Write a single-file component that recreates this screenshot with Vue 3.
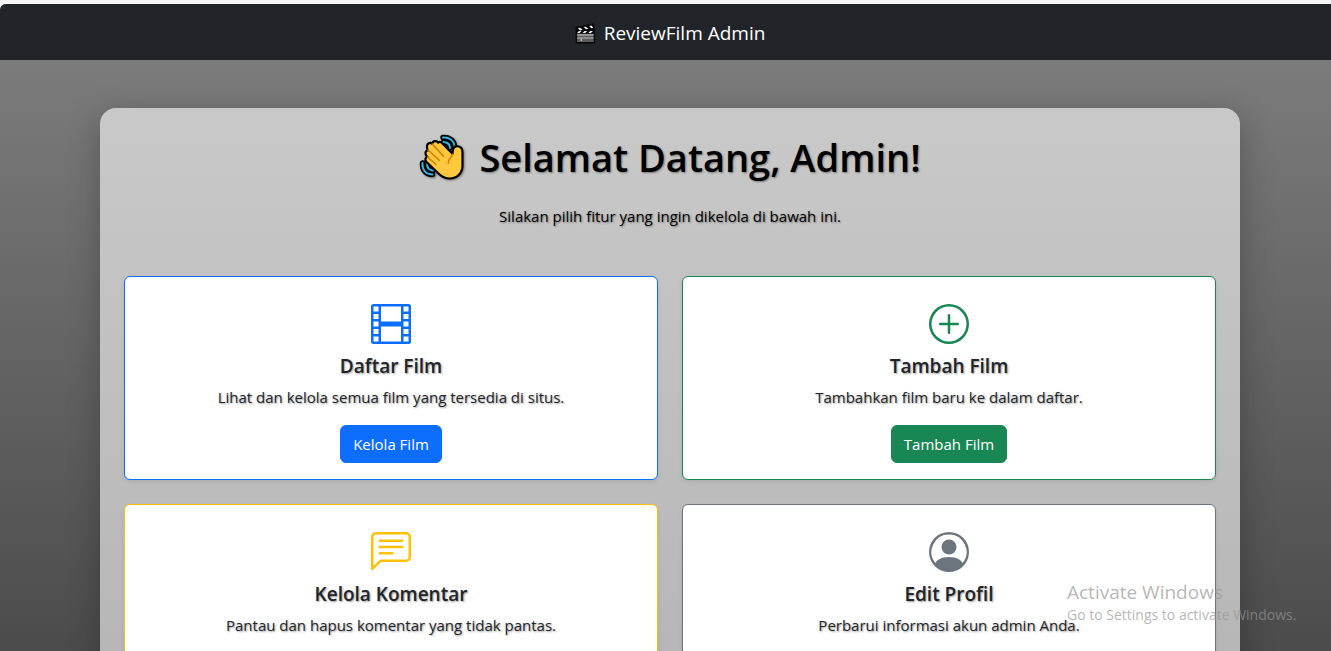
<script setup>
const features = [
  { id: 'film', tone: 'blue', title: 'Daftar Film', text: 'Lihat dan kelola semua film yang tersedia di situs.', action: 'Kelola Film' },
  { id: 'plus', tone: 'green', title: 'Tambah Film', text: 'Tambahkan film baru ke dalam daftar.', action: 'Tambah Film' },
  { id: 'chat', tone: 'yellow', title: 'Kelola Komentar', text: 'Pantau dan hapus komentar yang tidak pantas.' },
  { id: 'person', tone: 'gray', title: 'Edit Profil', text: 'Perbarui informasi akun admin Anda.' }
]
</script>

<template>
  <div class="screen">
    <div class="page">
      <header class="navbar">
        <a class="brand" href="#">
          <svg class="clapper" viewBox="0 0 22 22" aria-hidden="true">
            <path d="M1 4.5 19.5.8l1 4V21H1.200z" fill="#08090a" stroke="#08090a" stroke-linejoin="round" />
            <path d="M2.200 11.200h17.300v8.600H2.200z" fill="#5d5d5d" />
            <path d="M2.200 12.500h17.300M2.200 15.700h17.300" stroke="#b5b5b5" stroke-width="1.200" />
            <path d="M6.500 16v3" stroke="#ddd" />
            <path d="m3 5.500 2.300-.5L8 7.200l-2.500.6zM9 4.300l2.300-.5L14 6l-2.500.6zM15 3.100l2.200-.5 2 2.400-2.200.5zM4.200 8.300h2.600l-2 2.300H2.200zM10 8.300h2.700l-2 2.300H8zM16 8.300h2.700l-2 2.300H14z" fill="#f5f5f5" />
          </svg>
          <span>ReviewFilm Admin</span>
        </a>
      </header>

      <main class="panel">
        <h1 class="welcome">
          <svg class="wave" viewBox="0 0 46 46" aria-hidden="true">
            <g fill="none" stroke-linecap="round">
              <g stroke="#000" stroke-width="5.500">
                <path d="M24 3.500C31 3 36 7.500 35.500 14M24.500 8c4 .3 6.500 2.500 6.500 6" />
                <path d="M3.500 29C3 36 7 40.500 13.500 40.500M8 30c0 4 2.500 6.200 6 6.500" />
              </g>
              <g stroke="#35b5e0" stroke-width="2">
                <path d="M24 3.500C31 3 36 7.500 35.500 14M24.500 8c4 .3 6.500 2.500 6.500 6" />
                <path d="M3.500 29C3 36 7 40.500 13.500 40.500M8 30c0 4 2.500 6.200 6 6.500" />
              </g>
            </g>
            <path d="M8 13c-.5-3.500 3-5 5.200-3.200.8-3.300 4.500-3.300 6-1.300 1.800-1.300 4 .2 5 1.800l9.300 9.500c.5-3.300-.2-7 3.500-7.500 4.500-.5 6.500 2 6.500 6v13.500C43.500 39.500 37.500 44.500 31 44.500c-4.500 0-8.500-2-11.500-5L7.500 28c-2.500-2.500-.5-5 1-5-3.500-3-2-6.500.5-6.500-1-1-1-2-1-3.500z" fill="#ffc83d" stroke="#000" stroke-width="2.200" stroke-linejoin="round" />
            <path d="m8.500 23 8.500 7.500M9 16l11.500 10.500M13.200 10l11.300 12.300M33.500 20.300c0 2.500-4.500 4-4.300 9" fill="none" stroke="#d67d00" stroke-width="1.600" stroke-linecap="round" />
          </svg>
          <span>Selamat Datang, Admin!</span>
        </h1>
        <p class="lead">Silakan pilih fitur yang ingin dikelola di bawah ini.</p>

        <div class="grid">
          <section v-for="item in features" :key="item.id" class="card" :class="item.tone">
            <svg class="icon" viewBox="0 0 16 16" fill="currentColor" aria-hidden="true">
              <path v-if="item.id === 'film'" d="M0 1a1 1 0 0 1 1-1h14a1 1 0 0 1 1 1v14a1 1 0 0 1-1 1H1a1 1 0 0 1-1-1zm4 0v6h8V1zm8 8H4v6h8zM1 1v2h2V1zm2 3H1v2h2zM1 7v2h2V7zm2 3H1v2h2zm-2 3v2h2v-2zM15 1h-2v2h2zm-2 3v2h2V4zm2 3h-2v2h2zm-2 3v2h2v-2zm2 3h-2v2h2z" />
              <template v-else-if="item.id === 'plus'">
                <path d="M8 15A7 7 0 1 1 8 1a7 7 0 0 1 0 14m0 1A8 8 0 1 0 8 0a8 8 0 0 0 0 16" />
                <path d="M8 4a.5.5 0 0 1 .5.5v3h3a.5.5 0 0 1 0 1h-3v3a.5.5 0 0 1-1 0v-3h-3a.5.5 0 0 1 0-1h3v-3A.5.5 0 0 1 8 4" />
              </template>
              <template v-else-if="item.id === 'chat'">
                <path d="M14 1a1 1 0 0 1 1 1v8a1 1 0 0 1-1 1H4.414A2 2 0 0 0 3 11.586l-2 2V2a1 1 0 0 1 1-1zM2 0a2 2 0 0 0-2 2v12.793a.5.5 0 0 0 .854.353l2.853-2.853A1 1 0 0 1 4.414 12H14a2 2 0 0 0 2-2V2a2 2 0 0 0-2-2z" />
                <path d="M3 3.500a.5.5 0 0 1 .5-.5h9a.5.5 0 0 1 0 1h-9a.5.5 0 0 1-.5-.5M3 6a.5.5 0 0 1 .5-.5h9a.5.5 0 0 1 0 1h-9A.5.5 0 0 1 3 6m0 2.500a.5.5 0 0 1 .5-.5h5a.5.5 0 0 1 0 1h-5a.5.5 0 0 1-.5-.5" />
              </template>
              <template v-else>
                <path d="M11 6a3 3 0 1 1-6 0 3 3 0 0 1 6 0" />
                <path fill-rule="evenodd" d="M0 8a8 8 0 1 1 16 0A8 8 0 0 1 0 8m8-7a7 7 0 0 0-5.468 11.370C3.242 11.226 4.805 10 8 10s4.757 1.225 5.468 2.370A7 7 0 0 0 8 1" />
              </template>
            </svg>
            <h2 class="title">{{ item.title }}</h2>
            <p class="text">{{ item.text }}</p>
            <a v-if="item.action" class="btn" href="#">{{ item.action }}</a>
          </section>
        </div>
      </main>
    </div>

    <aside class="notice">
      <p class="notice-title">Activate Windows</p>
      <p class="notice-text">Go to Settings to activate Windows.</p>
    </aside>
  </div>
</template>

<style>
body {
  margin: 0;
}
</style>

<style scoped>
.screen {
  position: relative;
  box-sizing: border-box;
  height: 100vh;
  padding-top: 4px;
  overflow: hidden;
  background: #f4f6f5;
  color: #212529;
  font-family: "Segoe UI", "Open Sans", "Noto Sans", sans-serif;
  font-size: 15px;
  line-height: 24px;
}
.page {
  min-height: 100%;
  margin-right: -9px;
  border-top-left-radius: 6px;
  overflow: hidden;
  background: linear-gradient(#808080 0, #4b4b4b 651px, #1c1c1c 1200px);
}
.navbar {
  display: flex;
  align-items: center;
  justify-content: center;
  box-sizing: border-box;
  height: 56px;
  padding-top: 2px;
  background: #212529;
}
.brand {
  display: flex;
  align-items: center;
  gap: 8px;
  color: #fff;
  font-size: 19px;
  text-decoration: none;
}
.clapper {
  width: 21px;
  height: 21px;
}
.panel {
  box-sizing: border-box;
  max-width: 1140px;
  margin: 48px auto;
  padding: 24px;
  border-radius: 16px;
  background: rgba(255, 255, 255, 0.6);
  box-shadow: 0 8px 32px rgba(0, 0, 0, 0.25);
  text-align: center;
  text-shadow: 1px 1px 2px rgba(0, 0, 0, 0.4);
}
.welcome {
  display: flex;
  align-items: center;
  justify-content: center;
  gap: 14px;
  margin: 0 0 22px;
  color: #000;
  font-size: 38px;
  font-weight: 600;
  line-height: 50px;
}
.wave {
  width: 46px;
  height: 46px;
  filter: drop-shadow(1px 1px 1px rgba(0, 0, 0, 0.4));
}
.lead {
  margin: 0 0 48px;
  color: #000;
}
.grid {
  display: grid;
  grid-template-columns: 1fr 1fr;
  grid-auto-rows: 1fr;
  gap: 24px;
}
.card {
  --tone: #0d6efd;
  padding: 27px 16px 16px;
  border: 1px solid var(--tone);
  border-radius: 6px;
  background: #fff;
  box-shadow: 0 2px 4px rgba(0, 0, 0, 0.08);
}
.green {
  --tone: #198754;
}
.yellow {
  --tone: #ffc107;
}
.gray {
  --tone: #6c757d;
}
.icon {
  display: block;
  width: 40px;
  height: 40px;
  margin: 0 auto 9px;
  color: var(--tone);
}
.title {
  margin: 0 0 6px;
  font-size: 19px;
  font-weight: 600;
  line-height: 26px;
}
.text {
  margin: 0 0 16px;
}
.btn {
  display: inline-block;
  padding: 6px 12px;
  border: 1px solid var(--tone);
  border-radius: 6px;
  background: var(--tone);
  color: #fff;
  text-decoration: none;
  text-shadow: none;
  vertical-align: top;
}
.notice {
  position: absolute;
  right: 28px;
  bottom: 24px;
  width: 236px;
  color: rgba(150, 150, 150, 0.7);
  font-size: 14px;
  white-space: nowrap;
  pointer-events: none;
}
.notice p {
  margin: 0;
}
.notice-title {
  font-size: 19px;
  line-height: 22px;
}
</style>
